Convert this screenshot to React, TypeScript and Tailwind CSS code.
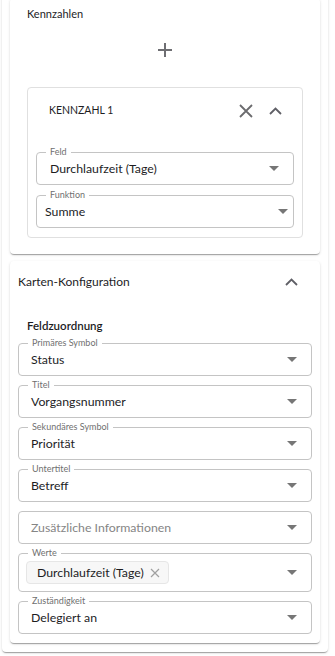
import React from "react";

const font = { fontFamily: 'Lato, "Liberation Sans", sans-serif' };

const ArrowDrop = () => (
  <svg width="10" height="5" viewBox="0 0 10 5" className="shrink-0 text-[#767676]">
    <path d="M0 0h10L5 5z" fill="currentColor" />
  </svg>
);

type SelectProps = {
  label?: string;
  value?: string;
  placeholder?: string;
  valuePad?: string;
  arrowPad?: string;
  height?: string;
  children?: React.ReactNode;
};

const Select = ({
  label,
  value,
  placeholder,
  valuePad = "pl-[12px]",
  arrowPad = "pr-[14px]",
  height = "h-[33px]",
  children,
}: SelectProps) => (
  <div
    className={`relative flex ${height} items-center justify-between rounded-[4px] border border-[#c4c4c4] ${valuePad} ${arrowPad}`}
  >
    {label && (
      <span className="absolute left-[9px] top-[-7px] bg-white px-[4px] text-[9px] leading-[12px] text-[#707070]">
        {label}
      </span>
    )}
    {children ? (
      children
    ) : value ? (
      <span className="text-[12.3px] leading-[18px] text-[#1d1d1f]">{value}</span>
    ) : (
      <span className="text-[12.3px] leading-[18px] text-[#858585]">{placeholder}</span>
    )}
    <ArrowDrop />
  </div>
);

const ChevronUp = () => (
  <svg width="13" height="8" viewBox="0 0 13 8" fill="none">
    <path d="M1 7l5.5-5.5L12 7" stroke="#5f5f66" strokeWidth="1.8" />
  </svg>
);

const paper =
  "rounded-[4px] bg-white shadow-[0_2px_1px_-1px_rgba(0,0,0,0.2),0_1px_1px_0_rgba(0,0,0,0.14),0_1px_3px_0_rgba(0,0,0,0.12)]";

export default function App() {
  return (
    <div style={font} className="h-[656px] w-[335px] overflow-hidden bg-white">
      <div className={`ml-[2px] -mt-[10px] w-[326px] px-[8px] pb-[9px] pt-[8px] ${paper}`}>
        {/* Kennzahlen */}
        <div className={`px-[17px] pb-[16px] pt-[8px] ${paper}`}>
          <div className="text-[11px] leading-[16px] text-[#1d1d1f]">Kennzahlen</div>
          <div className="mt-[8px] flex h-[40px] items-center justify-center">
            <svg width="14" height="14" viewBox="0 0 14 14">
              <path d="M7 0v14M0 7h14" stroke="#6e6e72" strokeWidth="2" />
            </svg>
          </div>
          <div className="mt-[17px] rounded-[4px] border border-[#e0e0e0] px-[8px] pb-[9px]">
            <div className="flex h-[46px] items-center justify-between pl-[13px] pr-[12px]">
              <span className="text-[10.5px] text-[#1d1d1f]">KENNZAHL 1</span>
              <div className="flex items-center gap-[16px]">
                <svg width="14" height="14" viewBox="0 0 14 14">
                  <path d="M1 1l12 12M13 1L1 13" stroke="#6b6b6e" strokeWidth="1.8" />
                </svg>
                <ChevronUp />
              </div>
            </div>
            <div className="mt-[18px] flex flex-col gap-[10px]">
              <Select label="Feld" value="Durchlaufzeit (Tage)" valuePad="pl-[13px]" arrowPad="pr-[14px]" />
              <Select label="Funktion" value="Summe" valuePad="pl-[8px]" arrowPad="pr-[5px]" />
            </div>
          </div>
        </div>

        {/* Karten-Konfiguration */}
        <div className={`mt-[7px] px-[8px] pb-[9px] ${paper}`}>
          <div className="flex h-[42px] items-center justify-between pr-[14px]">
            <span className="text-[12px] text-[#1d1d1f]">Karten-Konfiguration</span>
            <ChevronUp />
          </div>
          <div className="mt-[15px] pl-[9px] text-[11.5px] font-semibold leading-[16px] text-[#1d1d1f]">
            Feldzuordnung
          </div>
          <div className="mt-[9px] flex flex-col gap-[9px]">
            <Select label="Primäres Symbol" value="Status" />
            <Select label="Titel" value="Vorgangsnummer" />
            <Select label="Sekundäres Symbol" value="Priorität" />
            <Select label="Untertitel" value="Betreff" />
            <Select placeholder="Zusätzliche Informationen" />
            <Select label="Werte" height="h-[39px]" valuePad="pl-[7px]">
              <div className="flex h-[23px] items-center gap-[6px] rounded-[4px] border border-[#e6e6e6] bg-[#f7f7f7] pl-[10px] pr-[8px]">
                <span className="text-[12.3px] leading-[18px] text-[#1d1d1f]">Durchlaufzeit (Tage)</span>
                <svg width="10" height="10" viewBox="0 0 10 10">
                  <path d="M1 1l8 8M9 1L1 9" stroke="#a0a0a0" strokeWidth="1.2" />
                </svg>
              </div>
            </Select>
            <Select label="Zuständigkeit" value="Delegiert an" />
          </div>
        </div>
      </div>
    </div>
  );
}
